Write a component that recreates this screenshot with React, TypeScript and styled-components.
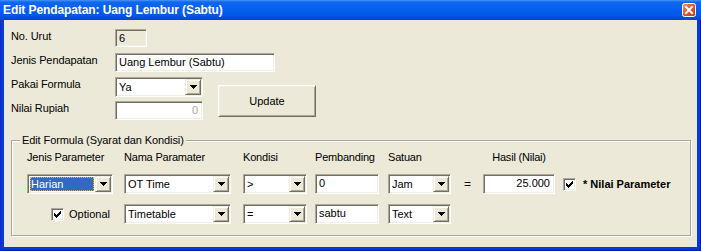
import React from 'react';
import styled, { createGlobalStyle } from 'styled-components';

const GlobalStyle = createGlobalStyle`
  html, body {
    margin: 0;
    padding: 0;
    background: #ECE9D8;
  }
  body {
    font-family: "Liberation Sans", Arial, sans-serif;
    font-size: 11px;
    color: #000;
  }
`;

const Window = styled.div`
  width: 701px;
  height: 251px;
  display: flex;
  flex-direction: column;
  overflow: hidden;
`;

const TitleBar = styled.div`
  height: 20px;
  flex: none;
  display: flex;
  align-items: center;
  justify-content: space-between;
  padding: 0 5px 0 3px;
  background: linear-gradient(#4B95F9 0, #0F67F2 2px, #0560EE 45%, #0256E6 80%, #0044CF 100%);
  color: #fff;
  font-weight: bold;
  font-size: 12px;
  letter-spacing: -0.1px;
`;

const Frame = styled.div`
  flex: 1;
  display: flex;
  padding: 0 4px 4px 4px;
  background: #0739D4;
  box-shadow: inset 1px 0 #0A2FB8, inset -1px -1px #0019A8;
`;

const Body = styled.div`
  flex: 1;
  display: flex;
  flex-direction: column;
  background: #ECE9D8;
  padding: 9px 6px 10px 7px;
`;

const TopGrid = styled.div`
  display: grid;
  grid-template-columns: 104px 103px 98px;
  grid-auto-rows: 19px;
  row-gap: 5px;
`;

const Label = styled.div`
  line-height: 13px;
  padding-top: 1px;
  white-space: nowrap;
  letter-spacing: -0.1px;
`;

const sunken = `
  border: 1px solid;
  border-color: #ACA899 #FFFFFF #FFFFFF #ACA899;
  box-shadow: inset 1px 1px #716F64, inset -1px -1px #F1EFE2;
`;

const TextBox = styled.div<{ $w: number; $h?: number; $align?: string; $muted?: boolean; $face?: boolean; $span?: boolean }>`
  ${sunken}
  box-sizing: border-box;
  width: ${p => p.$w}px;
  height: ${p => p.$h ?? 19}px;
  background: ${p => (p.$face ? '#ECE9D8' : '#FFFFFF')};
  color: ${p => (p.$muted ? '#ACA899' : '#000')};
  text-align: ${p => p.$align ?? 'left'};
  padding: 0 4px 0 3px;
  line-height: 17px;
  white-space: nowrap;
  overflow: hidden;
  grid-column: ${p => (p.$span ? '2 / span 2' : 'auto')};
`;

const ComboBox = styled.div<{ $w: number }>`
  ${sunken}
  box-sizing: border-box;
  width: ${p => p.$w}px;
  height: 20px;
  background: #fff;
  display: flex;
  padding: 1px;
`;

const ComboText = styled.div<{ $selected?: boolean }>`
  flex: 1;
  margin: 1px;
  padding-left: 1px;
  line-height: 14px;
  white-space: nowrap;
  overflow: hidden;
  background: ${p => (p.$selected ? '#316AC5' : 'transparent')};
  color: ${p => (p.$selected ? '#fff' : '#000')};
  outline: ${p => (p.$selected ? '1px dotted #E8B040' : 'none')};
  outline-offset: -1px;
`;

const ArrowButton = styled.div`
  width: 16px;
  flex: none;
  box-sizing: border-box;
  display: flex;
  align-items: center;
  justify-content: center;
  background: #ECE9D8;
  border: 1px solid;
  border-color: #F1EFE2 #716F64 #716F64 #F1EFE2;
  box-shadow: inset 1px 1px #FFFFFF, inset -1px -1px #ACA899;
`;

const Button = styled.button`
  grid-column: 3;
  grid-row: 3 / span 2;
  margin-top: 8px;
  width: 98px;
  height: 32px;
  box-sizing: border-box;
  background: #ECE9D8;
  border: 1px solid;
  border-color: #FFFFFF #716F64 #716F64 #FFFFFF;
  box-shadow: inset 1px 1px #F1EFE2, inset -1px -1px #ACA899;
  font-family: "Liberation Sans", Arial, sans-serif;
  font-size: 11px;
  color: #000;
  padding: 0;
`;

const GroupBox = styled.div`
  position: relative;
  margin-top: 20px;
  border: 1px solid #ACA899;
  box-shadow: inset 1px 1px #FFFFFF, 1px 1px #FFFFFF;
  padding: 10px 0 11px 15px;
`;

const Legend = styled.span`
  position: absolute;
  top: -7px;
  left: 8px;
  padding: 0 2px;
  background: #ECE9D8;
  line-height: 13px;
  letter-spacing: -0.1px;
`;

const ParamGrid = styled.div`
  display: grid;
  grid-template-columns: 97px 119px 72px 73px 75px 20px 80px auto;
  grid-template-rows: 13px 20px 20px;
  row-gap: 10px;
  align-items: center;
`;

const Header = styled.div<{ $center?: boolean }>`
  line-height: 13px;
  white-space: nowrap;
  letter-spacing: -0.2px;
  width: ${p => (p.$center ? '72px' : 'auto')};
  text-align: ${p => (p.$center ? 'center' : 'left')};
`;

const Equals = styled.div`
  padding-left: 1px;
  font-size: 12px;
`;

const CheckRow = styled.label<{ $indent?: number; $gap: number }>`
  display: flex;
  align-items: center;
  gap: ${p => p.$gap}px;
  padding-left: ${p => p.$indent ?? 0}px;
  white-space: nowrap;
`;

const CheckBox = styled.span`
  ${sunken}
  box-sizing: border-box;
  width: 13px;
  height: 13px;
  background: #fff;
  display: flex;
  align-items: center;
  justify-content: center;
`;

const BoldText = styled.span`
  font-weight: bold;
`;

const Arrow = () => (
  <svg width="7" height="4" viewBox="0 0 7 4" shapeRendering="crispEdges">
    <path d="M0 0h7v1h-1v1h-1v1h-1v1h-1v-1h-1v-1h-1v-1h-1z" fill="#000" />
  </svg>
);

const Check = () => (
  <svg width="7" height="7" viewBox="0 0 7 7" shapeRendering="crispEdges">
    <path d="M0 2h1v1h1v1h1v-1h1v-1h1v-1h1v-1h1v3h-1v1h-1v1h-1v1h-1v1h-1v-1h-1v-1h-1v-1h-1z" fill="#000" />
  </svg>
);

const CloseIcon = () => (
  <svg width="14" height="14" viewBox="0 0 14 14">
    <defs>
      <linearGradient id="cl" x1="0" y1="0" x2="1" y2="1">
        <stop offset="0" stopColor="#F09A7A" />
        <stop offset="0.45" stopColor="#E2582E" />
        <stop offset="1" stopColor="#C1381A" />
      </linearGradient>
    </defs>
    <rect x="0.5" y="0.5" width="13" height="13" rx="2" fill="url(#cl)" stroke="#fff" />
    <path d="M4 4l6 6M10 4l-6 6" stroke="#fff" strokeWidth="2" strokeLinecap="square" />
  </svg>
);

const Combo = ({ w, value, selected }: { w: number; value: string; selected?: boolean }) => (
  <ComboBox $w={w}>
    <ComboText $selected={selected}>{value}</ComboText>
    <ArrowButton>
      <Arrow />
    </ArrowButton>
  </ComboBox>
);

export default function App() {
  return (
    <>
      <GlobalStyle />
      <Window>
        <TitleBar>
          <span>Edit Pendapatan: Uang Lembur (Sabtu)</span>
          <CloseIcon />
        </TitleBar>
        <Frame>
          <Body>
            <TopGrid>
              <Label>No. Urut</Label>
              <TextBox $w={32} $h={18} $face>6</TextBox>
              <div />

              <Label>Jenis Pendapatan</Label>
              <TextBox $w={160} $span>Uang Lembur (Sabtu)</TextBox>

              <Label>Pakai Formula</Label>
              <Combo w={88} value="Ya" />
              <Button>Update</Button>

              <Label>Nilai Rupiah</Label>
              <TextBox $w={88} $align="right" $muted>0</TextBox>
            </TopGrid>

            <GroupBox>
              <Legend>Edit Formula (Syarat dan Kondisi)</Legend>
              <ParamGrid>
                <Header>Jenis Parameter</Header>
                <Header>Nama Paramater</Header>
                <Header>Kondisi</Header>
                <Header>Pembanding</Header>
                <Header>Satuan</Header>
                <div />
                <Header $center>Hasil (Nilai)</Header>
                <div />

                <Combo w={86} value="Harian" selected />
                <Combo w={107} value="OT Time" />
                <Combo w={64} value=">" />
                <TextBox $w={64} $h={20}>0</TextBox>
                <Combo w={63} value="Jam" />
                <Equals>=</Equals>
                <TextBox $w={72} $h={20} $align="right">25.000</TextBox>
                <CheckRow $gap={7}>
                  <CheckBox>
                    <Check />
                  </CheckBox>
                  <BoldText>* Nilai Parameter</BoldText>
                </CheckRow>

                <CheckRow $indent={24} $gap={5}>
                  <CheckBox>
                    <Check />
                  </CheckBox>
                  <span>Optional</span>
                </CheckRow>
                <Combo w={107} value="Timetable" />
                <Combo w={64} value="=" />
                <TextBox $w={64} $h={20}>sabtu</TextBox>
                <Combo w={63} value="Text" />
              </ParamGrid>
            </GroupBox>
          </Body>
        </Frame>
      </Window>
    </>
  );
}
